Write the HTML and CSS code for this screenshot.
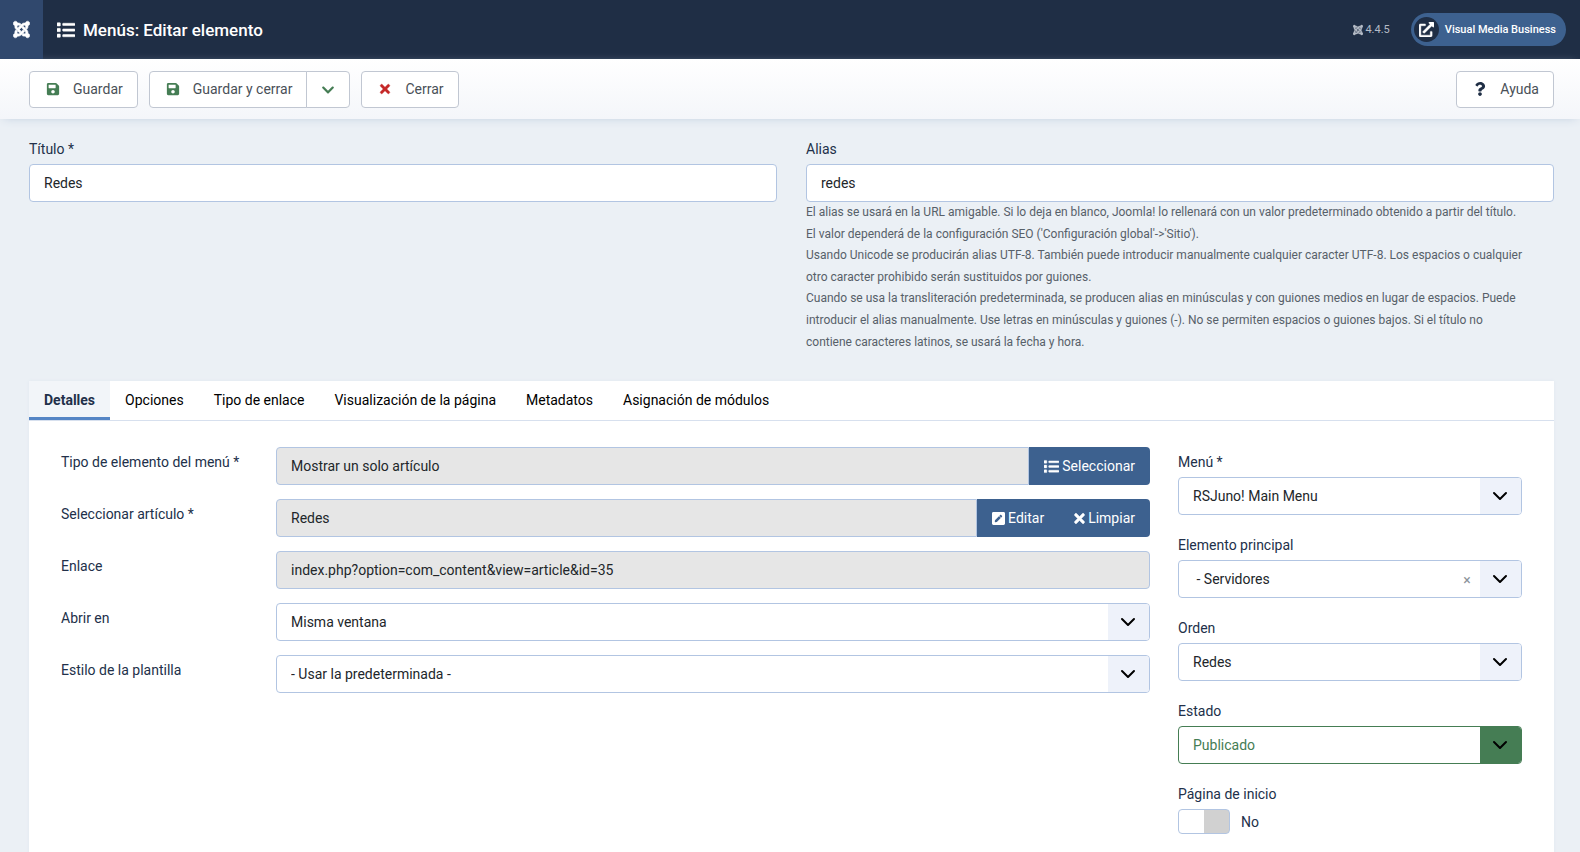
FILE: index.html
```html
<!DOCTYPE html>
<html lang="es">
<head>
<meta charset="utf-8">
<title>Menús: Editar elemento</title>
<meta name="viewport" content="width=device-width, initial-scale=1">
<link rel="stylesheet" href="styles.css">
</head>
<body>
<svg class="sprite" aria-hidden="true">
  <symbol id="i-joomla" viewBox="0 0 448 512"><path stroke="currentColor" stroke-width="14" d="M.6 92.1C.6 58.800 27.400 32 60.400 32c30 0 54.500 21.900 59.200 50.200 32.600-7.600 67.100.6 96.500 30l-44.300 44.300c-20.500-20.500-42.600-16.300-55.400-3.500-14.300 14.300-14.300 37.900 0 52.200l99.500 99.500-44 44.300c-87.700-87.200-49.700-49.700-99.800-99.700-26.800-26.500-35-64.800-24.800-98.900C20.400 144.600.6 120.700.6 92.100zm129.500 116.400l44.300 44.300c10-10 89.700-89.700 99.700-99.800 14.300-14.300 37.600-14.300 51.900 0 12.800 12.800 17 35-3.500 55.400l44 44.300c31.200-31.200 38.500-67.600 28.900-101.200 29.200-4.100 51.900-29.200 51.900-59.500 0-33.200-26.800-60.100-59.800-60.100-30.300 0-55.400 22.500-59.500 51.600-33.800-9.900-71.700-1.500-98.300 25.100-18.300 19.100-71.100 71.500-99.600 99.900zm266.300 152.200c8.200-32.700-.9-68.500-26.300-93.900-11.800-12.200 5 4.700-99.500-99.700l-44.300 44.300 99.700 99.700c14.300 14.300 14.300 37.600 0 51.900-12.800 12.800-35 17-55.400-3.500l-44 44.300c27.600 30.200 68 38.800 102.700 28 5.500 27.400 29.700 48.100 58.900 48.100 33 0 59.800-26.800 59.800-60.100 0-30.200-22.500-55-51.600-59.100zm-84.300-53.100l-44-44.300c-87 86.400-50.400 50.400-99.700 99.800-14.300 14.300-37.600 14.300-51.900 0-13.100-13.400-16.900-35.300 3.200-55.400l-44-44.300c-30.200 30.200-38 65.200-29.500 98.300-26.700 6-46.200 29.900-46.200 58.200C0 453.200 26.800 480 59.800 480c28.600 0 52.500-19.800 58.600-46.700 32.700 8.200 68.500-.6 94.200-26 32.100-32 12.200-12.400 99.500-99.700z"/></symbol>
  <symbol id="i-list" viewBox="0 0 512 512"><path stroke="currentColor" stroke-width="14" d="M80 368H16a16 16 0 0 0-16 16v64a16 16 0 0 0 16 16h64a16 16 0 0 0 16-16v-64a16 16 0 0 0-16-16zm0-320H16A16 16 0 0 0 0 64v64a16 16 0 0 0 16 16h64a16 16 0 0 0 16-16V64a16 16 0 0 0-16-16zm0 160H16a16 16 0 0 0-16 16v64a16 16 0 0 0 16 16h64a16 16 0 0 0 16-16v-64a16 16 0 0 0-16-16zm416 176H176a16 16 0 0 0-16 16v32a16 16 0 0 0 16 16h320a16 16 0 0 0 16-16v-32a16 16 0 0 0-16-16zm0-320H176a16 16 0 0 0-16 16v32a16 16 0 0 0 16 16h320a16 16 0 0 0 16-16V80a16 16 0 0 0-16-16zm0 160H176a16 16 0 0 0-16 16v32a16 16 0 0 0 16 16h320a16 16 0 0 0 16-16v-32a16 16 0 0 0-16-16z"/></symbol>
  <symbol id="i-save" viewBox="0 0 448 512"><path d="M433.941 129.941l-83.882-83.882A48 48 0 0 0 316.118 32H48C21.490 32 0 53.490 0 80v352c0 26.510 21.490 48 48 48h352c26.510 0 48-21.490 48-48V163.882a48 48 0 0 0-14.059-33.941zM224 416c-35.346 0-64-28.654-64-64 0-35.346 28.654-64 64-64s64 28.654 64 64c0 35.346-28.654 64-64 64zm96-304.520V212c0 6.627-5.373 12-12 12H76c-6.627 0-12-5.373-12-12V108c0-6.627 5.373-12 12-12h228.520c3.183 0 6.235 1.264 8.485 3.515l3.480 3.480A11.996 11.996 0 0 1 320 111.480z"/></symbol>
  <symbol id="i-times" viewBox="0 0 352 512"><path stroke="currentColor" stroke-width="14" d="M242.720 256l100.070-100.070c12.280-12.280 12.280-32.190 0-44.480l-22.240-22.240c-12.280-12.280-32.190-12.280-44.480 0L176 189.280 75.930 89.210c-12.280-12.280-32.190-12.280-44.480 0L9.210 111.450c-12.280 12.280-12.280 32.190 0 44.480L109.280 256 9.210 356.070c-12.280 12.280-12.280 32.190 0 44.480l22.240 22.240c12.280 12.280 32.200 12.280 44.480 0L176 322.720l100.070 100.070c12.280 12.280 32.200 12.280 44.480 0l22.240-22.240c12.280-12.280 12.280-32.190 0-44.480L242.720 256z"/></symbol>
  <symbol id="i-chevron" viewBox="0 0 448 512"><path d="M207.029 381.476L12.686 187.132c-9.373-9.373-9.373-24.569 0-33.941l22.667-22.667c9.357-9.357 24.522-9.375 33.901-.04L224 284.505l154.745-154.021c9.379-9.335 24.544-9.317 33.901.04l22.667 22.667c9.373 9.373 9.373 24.569 0 33.941L240.971 381.476c-9.373 9.372-24.569 9.372-33.942 0z"/></symbol>
  <symbol id="i-arrow" viewBox="0 0 16 16"><path d="M2 5l6 6 6-6" fill="none" stroke="currentColor" stroke-width="2" stroke-linecap="round" stroke-linejoin="round"/></symbol>
  <symbol id="i-question" viewBox="0 0 384 512"><path d="M202.021 0C122.202 0 70.503 32.703 29.914 91.026c-7.363 10.580-5.093 25.086 5.178 32.874l43.138 32.709c10.373 7.865 25.132 6.026 33.253-4.148 25.049-31.381 43.630-49.449 82.757-49.449 30.764 0 68.816 19.799 68.816 49.631 0 22.552-18.617 34.134-48.993 51.164-35.423 19.860-82.299 44.576-82.299 106.405V320c0 13.255 10.745 24 24 24h72.471c13.255 0 24-10.745 24-24v-5.773c0-42.860 125.268-44.645 125.268-160.627C377.504 66.256 286.902 0 202.021 0zM192 373.459c-38.196 0-69.271 31.075-69.271 69.271 0 38.195 31.075 69.270 69.271 69.270s69.271-31.075 69.271-69.271-31.075-69.270-69.271-69.270z"/></symbol>
  <symbol id="i-external" viewBox="0 0 512 512"><path stroke="currentColor" stroke-width="14" d="M432 320h-32a16 16 0 0 0-16 16v112H64V128h144a16 16 0 0 0 16-16V80a16 16 0 0 0-16-16H48a48 48 0 0 0-48 48v352a48 48 0 0 0 48 48h352a48 48 0 0 0 48-48V336a16 16 0 0 0-16-16zM488 0H360c-21.370 0-32.050 25.910-17 41l35.730 35.730L135 320.370a24 24 0 0 0 0 34L157.670 377a24 24 0 0 0 34 0l243.610-243.680L471 169c15 15 41 4.500 41-17V24a24 24 0 0 0-24-24z"/></symbol>
  <symbol id="i-edit" viewBox="0 0 448 512"><path fill-rule="evenodd" d="M400 480H48c-26.500 0-48-21.500-48-48V80c0-26.500 21.500-48 48-48h352c26.500 0 48 21.500 48 48v352c0 26.500-21.500 48-48 48zM238.100 177.900L102.400 313.600l-6.300 57.100c-.8 7.600 5.600 14.100 13.300 13.300l57.100-6.300L302.200 242c2.300-2.300 2.300-6.100 0-8.500L246.700 178c-2.500-2.400-6.300-2.400-8.600-.1zM345 165.100L314.900 135c-9.400-9.400-24.600-9.400-33.900 0l-23.100 23.100c-2.300 2.300-2.300 6.100 0 8.500l55.500 55.500c2.300 2.300 6.100 2.300 8.500 0L345 199c9.300-9.300 9.300-24.500 0-33.900z"/></symbol>
</svg>

<header class="header">
  <a class="logo" href="#" aria-label="Panel de inicio"><svg class="icon icon-logo"><use href="#i-joomla"/></svg></a>
  <h1 class="page-title"><svg class="icon icon-title"><use href="#i-list"/></svg>Menús: Editar elemento</h1>
  <div class="version"><svg class="icon icon-small"><use href="#i-joomla"/></svg>4.4.5</div>
  <a class="site-link" href="#"><span class="site-badge"><svg class="icon icon-external"><use href="#i-external"/></svg></span>Visual Media Business</a>
</header>

<div class="toolbar">
  <button class="tool" type="button"><svg class="icon tool-icon green"><use href="#i-save"/></svg>Guardar</button>
  <div class="tool-group">
    <button class="tool" type="button"><svg class="icon tool-icon green"><use href="#i-save"/></svg>Guardar y cerrar</button>
    <button class="tool tool-toggle" type="button" aria-label="Más opciones"><svg class="icon tool-icon green"><use href="#i-chevron"/></svg></button>
  </div>
  <button class="tool" type="button"><svg class="icon tool-icon red"><use href="#i-times"/></svg>Cerrar</button>
  <button class="tool tool-help" type="button"><svg class="icon tool-icon navy"><use href="#i-question"/></svg>Ayuda</button>
</div>

<main class="content">
  <div class="title-row">
    <div class="field">
      <label for="title">Título *</label>
      <input class="control" id="title" type="text" value="Redes">
    </div>
    <div class="field">
      <label for="alias">Alias</label>
      <input class="control" id="alias" type="text" value="redes" aria-describedby="alias-help">
      <p class="help" id="alias-help">El alias se usará en la URL amigable. Si lo deja en blanco, Joomla! lo rellenará con un valor predeterminado obtenido a partir del título.<br>El valor dependerá de la configuración SEO ('Configuración global'-&gt;'Sitio').<br>Usando Unicode se producirán alias UTF-8. También puede introducir manualmente cualquier caracter UTF-8. Los espacios o cualquier<br>otro caracter prohibido serán sustituidos por guiones.<br>Cuando se usa la transliteración predeterminada, se producen alias en minúsculas y con guiones medios en lugar de espacios. Puede<br>introducir el alias manualmente. Use letras en minúsculas y guiones (-). No se permiten espacios o guiones bajos. Si el título no<br>contiene caracteres latinos, se usará la fecha y hora.</p>
    </div>
  </div>

  <div class="card">
    <div class="tabs" role="tablist">
      <button class="tab tab-active" type="button" role="tab" aria-selected="true">Detalles</button>
      <button class="tab" type="button" role="tab">Opciones</button>
      <button class="tab" type="button" role="tab">Tipo de enlace</button>
      <button class="tab" type="button" role="tab">Visualización de la página</button>
      <button class="tab" type="button" role="tab">Metadatos</button>
      <button class="tab" type="button" role="tab">Asignación de módulos</button>
    </div>

    <div class="panel">
      <div class="details">
        <div class="row">
          <label for="type">Tipo de elemento del menú *</label>
          <div class="input-group">
            <input class="control" id="type" type="text" value="Mostrar un solo artículo" readonly>
            <button class="action" type="button"><svg class="icon icon-action"><use href="#i-list"/></svg>Seleccionar</button>
          </div>
        </div>
        <div class="row">
          <label for="article">Seleccionar artículo *</label>
          <div class="input-group">
            <input class="control" id="article" type="text" value="Redes" readonly>
            <button class="action" type="button"><svg class="icon icon-action-narrow"><use href="#i-edit"/></svg>Editar</button>
            <button class="action" type="button"><svg class="icon icon-action-slim"><use href="#i-times"/></svg>Limpiar</button>
          </div>
        </div>
        <div class="row">
          <label for="link">Enlace</label>
          <input class="control" id="link" type="text" value="index.php?option=com_content&amp;view=article&amp;id=35" readonly>
        </div>
        <div class="row">
          <label for="target">Abrir en</label>
          <div class="select">
            <select class="control" id="target"><option>Misma ventana</option></select>
            <span class="select-arrow"><svg class="icon"><use href="#i-arrow"/></svg></span>
          </div>
        </div>
        <div class="row">
          <label for="style">Estilo de la plantilla</label>
          <div class="select">
            <select class="control" id="style"><option>- Usar la predeterminada -</option></select>
            <span class="select-arrow"><svg class="icon"><use href="#i-arrow"/></svg></span>
          </div>
        </div>
      </div>

      <div class="sidebar">
        <div class="field">
          <label for="menu">Menú *</label>
          <div class="select">
            <select class="control" id="menu"><option>RSJuno! Main Menu</option></select>
            <span class="select-arrow"><svg class="icon"><use href="#i-arrow"/></svg></span>
          </div>
        </div>
        <div class="field">
          <label for="parent">Elemento principal</label>
          <div class="select">
            <select class="control" id="parent"><option>&nbsp;- Servidores</option></select>
            <button class="clear" type="button" aria-label="Quitar">×</button>
            <span class="select-arrow"><svg class="icon"><use href="#i-arrow"/></svg></span>
          </div>
        </div>
        <div class="field">
          <label for="order">Orden</label>
          <div class="select">
            <select class="control" id="order"><option>Redes</option></select>
            <span class="select-arrow"><svg class="icon"><use href="#i-arrow"/></svg></span>
          </div>
        </div>
        <div class="field">
          <label for="state">Estado</label>
          <div class="select select-published">
            <select class="control" id="state"><option>Publicado</option></select>
            <span class="select-arrow"><svg class="icon"><use href="#i-arrow"/></svg></span>
          </div>
        </div>
        <div class="field">
          <label for="home">Página de inicio</label>
          <div class="switch">
            <input class="switch-input" id="home" type="checkbox" role="switch">
            <span>No</span>
          </div>
        </div>
      </div>
    </div>
  </div>
</main>
</body>
</html>
```
FILE: styles.css
```css
:root {
  --navy: #1f2e45;
  --blue: #3d618f;
  --green: #457d54;
  --border: #b2c5e2;
  --page: #ebf0f5;
  --label: #22304a;
}

*, *::before, *::after { box-sizing: border-box; }

html { overflow: hidden; }

body {
  margin: 0;
  min-height: 100vh;
  background: var(--page);
  color: #22262a;
  font-family: Roboto, "Liberation Sans", sans-serif;
  font-size: 14px;
  line-height: 22px;
}

button, input, select { font: inherit; color: inherit; margin: 0; }

button { cursor: pointer; }

.sprite { position: absolute; width: 0; height: 0; }

.icon { display: block; flex: none; width: 16px; height: 16px; fill: currentColor; overflow: visible; }

/* Header */
.header {
  display: flex;
  align-items: center;
  height: 59px;
  padding-right: 14px;
  background: var(--navy);
  color: #fff;
}

.logo {
  display: flex;
  align-items: center;
  justify-content: center;
  align-self: stretch;
  width: 43px;
  background: #30486d;
  color: #fff;
}

.icon-logo { width: 17px; height: 19px; }
.icon-title { width: 18px; height: 18px; }
.icon-small { width: 10px; height: 12px; }
.icon-external { width: 15px; height: 15px; }

.page-title {
  display: flex;
  align-items: center;
  gap: 8px;
  flex: 1;
  margin: 0;
  padding-left: 14px;
  font-size: 17px;
  font-weight: 500;
}

.version {
  display: flex;
  align-items: center;
  gap: 2px;
  margin-right: 21px;
  color: #b4bbc6;
  font-size: 11px;
}

.site-link {
  display: flex;
  align-items: center;
  gap: 6px;
  height: 33px;
  padding: 0 10px 0 3px;
  border-radius: 17px;
  background: var(--blue);
  color: #fff;
  font-size: 11px;
  font-weight: 500;
  text-decoration: none;
}

.site-badge {
  display: flex;
  align-items: center;
  justify-content: center;
  width: 25px;
  height: 25px;
  border-radius: 50%;
  background: var(--navy);
}

/* Toolbar */
.toolbar {
  display: flex;
  gap: 11px;
  padding: 12px 26px 11px 29px;
  background: linear-gradient(#fff, #f4f6fa);
  box-shadow: 0 2px 10px -4px #b4c4d8;
}

.tool {
  display: flex;
  align-items: center;
  gap: 11px;
  height: 37px;
  padding: 0 14px 2px;
  border: 1px solid #c1c7d2;
  border-radius: 4px;
  background: #fff;
  color: #495057;
}

.tool-icon { width: 18px; height: 14px; }
.tool-group { display: flex; }
.tool-group .tool:first-child { border-radius: 4px 0 0 4px; }
.tool-group .tool-toggle { margin-left: -1px; padding: 0 12px; border-radius: 0 4px 4px 0; }
.tool-help { margin-left: auto; }
.green { color: var(--green); }
.red { color: #c52827; }
.navy { color: var(--navy); }

/* Form */
.content { padding: 19px 26px 0 29px; }

.title-row { display: grid; grid-template-columns: 1fr 1fr; gap: 29px; }

label { color: var(--label); }

.field { display: flex; flex-direction: column; gap: 4px; }

.control {
  display: block;
  width: 100%;
  min-width: 0;
  height: 38px;
  padding: 0 14px;
  border: 1px solid var(--border);
  border-radius: 4px;
  background: #fff;
  appearance: none;
}

.control:read-only:not(select) { background: #e6e6e6; }

.help {
  margin: -4px 0 0;
  color: #576069;
  font-size: 12px;
  line-height: 1.8;
}

.card { margin-top: 28px; background: #fff; box-shadow: 0 0 3px #e1e7f0; }

.tabs { display: flex; border-bottom: 1px solid #d7e0ee; }

.tab {
  height: 39px;
  padding: 0 15px 2px;
  border: 0;
  background: none;
  color: #000;
}

.tab-active {
  background: #f2f5f9;
  box-shadow: inset 0 -3px #5585c5;
  color: var(--label);
  font-weight: 700;
}

.panel {
  display: grid;
  grid-template-columns: minmax(0, 1089fr) minmax(0, 344fr);
  gap: 28px;
  padding: 26px 32px;
}

.details { display: flex; flex-direction: column; gap: 14px; }

.row { display: grid; grid-template-columns: 215px minmax(0, 1fr); }
.row > label { padding-top: 4px; }

.input-group { display: flex; }
.input-group .control { flex: 1; border-radius: 4px 0 0 4px; }

.action {
  display: flex;
  align-items: center;
  gap: 3px;
  padding: 0 15px;
  border: 0;
  background: var(--blue);
  color: #fff;
}

.action:last-child { border-radius: 0 4px 4px 0; }
.icon-action { width: 15px; height: 15px; }
.icon-action-narrow { width: 13px; height: 15px; }
.icon-action-slim { width: 11px; height: 15px; }

.select { position: relative; }

.select-arrow {
  position: absolute;
  inset: 1px 1px 1px auto;
  display: flex;
  align-items: center;
  justify-content: center;
  width: 41px;
  padding-right: 2px;
  border-radius: 0 3px 3px 0;
  background: #eef2fa;
  color: #000;
  pointer-events: none;
}

.select-published .control { border-color: var(--green); color: var(--green); }
.select-published .select-arrow { background: var(--green); }

.clear {
  position: absolute;
  inset: 2px 42px 0 auto;
  width: 26px;
  padding: 0;
  border: 0;
  background: none;
  color: #8b929a;
}

.sidebar { display: flex; flex-direction: column; gap: 19px; padding-top: 4px; }

.switch { display: flex; align-items: center; gap: 11px; color: var(--label); }

.switch-input {
  width: 52px;
  height: 25px;
  border: 1px solid var(--border);
  border-radius: 4px;
  background: linear-gradient(to right, #fff 50%, #d1d1d1 50%);
  appearance: none;
}

.switch-input:checked { background: linear-gradient(to right, var(--green) 50%, #fff 50%); }
```
